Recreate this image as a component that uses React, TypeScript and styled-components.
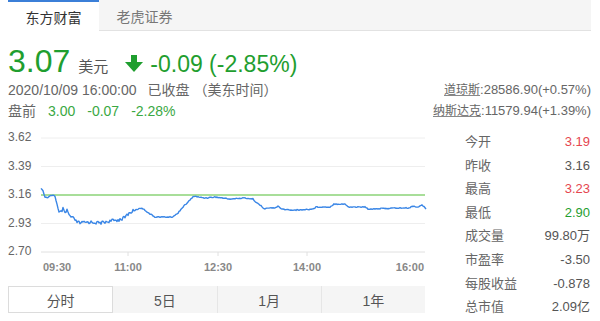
import styled, { createGlobalStyle } from "styled-components";

const GlobalStyle = createGlobalStyle`
  body {
    margin: 0;
    background: #fff;
    font-family: "Liberation Sans", "Noto Sans CJK SC", sans-serif;
  }
`;

const GREEN = "#1f9e2f";
const LIGHT_GREEN = "#3aa843";
const RED = "#e5464f";

const Page = styled.div`
  width: 583px;
  padding: 0 9px 0 8px;
  color: #666;
`;

const Tabs = styled.div`
  display: flex;
  height: 30px;
  background: #f5f5f5;
  border-bottom: 1px solid #e2e2e2;
`;

const Tab = styled.div<{ $active?: boolean }>`
  width: 91px;
  height: ${(p) => (p.$active ? "29px" : "28px")};
  margin-bottom: ${(p) => (p.$active ? "-1px" : "0")};
  border-top: 2px solid ${(p) => (p.$active ? "#3b7fd8" : "transparent")};
  background: ${(p) => (p.$active ? "#fff" : "transparent")};
  display: flex;
  align-items: center;
  justify-content: center;
  font-size: 14px;
  color: ${(p) => (p.$active ? "#333" : "#777")};
`;

const PriceRow = styled.div`
  display: flex;
  align-items: baseline;
  margin-top: 12px;
  height: 36px;
  line-height: 36px;
  color: ${GREEN};
`;

const Price = styled.span`
  font-size: 32px;
`;

const Unit = styled.span`
  font-size: 15px;
  margin-left: 8px;
  color: #555;
`;

const Arrow = styled.svg`
  width: 18px;
  height: 17px;
  margin-left: 17px;
  align-self: center;
  margin-top: 4px;
`;

const Change = styled.span`
  font-size: 23px;
  margin-left: 7px;
`;

const MetaRow = styled.div`
  display: flex;
  justify-content: space-between;
  align-items: center;
  height: 20px;
  line-height: 20px;
  margin-top: 1px;
`;

const MetaLeft = styled.div`
  display: flex;
  font-size: 14px;
  color: #666;
`;

const Gap = styled.span<{ $w: number }>`
  margin-left: ${(p) => p.$w}px;
`;

const Pre = styled.span`
  color: ${LIGHT_GREEN};
`;

const IndexLine = styled.div`
  font-size: 13px;
  color: #666;

  u {
    font-size: 12px;
    text-decoration-color: #888;
  }
`;

const Body = styled.div`
  display: flex;
  margin-top: 3px;
`;

const ChartColumn = styled.div`
  width: 420px;
  display: flex;
  flex-direction: column;
`;

const ChartSvg = styled.svg`
  display: block;
  width: 420px;
  height: 152px;
`;

const Periods = styled.div`
  display: flex;
  width: 417px;
  height: 27px;
  margin-top: 10px;
  background: #f5f5f5;
`;

const Period = styled.div<{ $active?: boolean; $sep?: boolean }>`
  flex: 1;
  display: flex;
  align-items: center;
  justify-content: center;
  font-size: 14px;
  color: #555;
  box-sizing: border-box;
  background: ${(p) => (p.$active ? "#fff" : "transparent")};
  border: ${(p) => (p.$active ? "1px solid #dcdcdc" : "none")};
  border-left: ${(p) =>
    p.$active ? "1px solid #dcdcdc" : p.$sep ? "1px solid #e6e6e6" : "none"};
`;

const Stats = styled.div`
  flex: 1;
  padding: 6px 1px 0 37px;
`;

const StatRow = styled.div`
  display: flex;
  justify-content: space-between;
  height: 23.6px;
  line-height: 23.6px;
  font-size: 13px;
`;

const StatLabel = styled.span`
  color: #666;
`;

const StatValue = styled.span<{ $tone?: "up" | "down" }>`
  color: ${(p) => (p.$tone === "up" ? RED : p.$tone === "down" ? GREEN : "#555")};
`;

const KEY: [number, number][] = [
  [41, 188], [43, 191], [45, 197], [48, 198], [50, 196], [53, 195], [55, 196],
  [57, 205], [59, 213], [61, 212], [63, 209], [65, 214], [67, 210], [69, 215],
  [71, 217], [74, 219], [77, 222], [80, 223], [90, 222], [100, 223], [110, 221],
  [118, 220], [124, 218], [128, 214], [133, 211], [138, 209], [142, 208],
  [146, 211], [150, 214], [155, 217], [165, 217], [172, 217], [177, 214],
  [182, 208], [186, 204], [190, 200], [194, 196], [198, 197], [205, 198],
  [215, 197], [230, 199], [245, 198], [253, 199], [257, 203], [261, 206],
  [265, 209], [268, 208], [275, 208], [278, 206], [281, 209], [290, 210],
  [300, 210], [313, 209], [316, 207], [330, 207], [334, 204], [345, 204],
  [348, 207], [365, 207], [368, 209], [400, 208], [410, 208], [412, 206],
  [418, 207], [422, 205], [425, 208], [426, 209],
];

function buildLine() {
  const pts: string[] = [];
  let i = 0;
  for (let x = 41; x <= 426; x += 1) {
    while (i < KEY.length - 2 && KEY[i + 1][0] < x) i++;
    const [x0, y0] = KEY[i];
    const [x1, y1] = KEY[i + 1];
    const t = Math.max(0, Math.min(1, (x - x0) / (x1 - x0)));
    const n = Math.sin(x * 12.9898) * 43758.5453;
    const amp = x > 56 && x < 135 ? 1.6 : 0.5;
    const y = y0 + (y1 - y0) * t + (n - Math.floor(n) - 0.5) * 2 * amp;
    pts.push(`${x},${y.toFixed(1)}`);
  }
  return pts.join(" ");
}

const GRID = [
  { y: 138, label: "3.62" },
  { y: 166.5, label: "3.39" },
  { y: 195, label: "3.16" },
  { y: 223.5, label: "2.93" },
  { y: 252, label: "2.70" },
];

const TIMES = [
  { x: 43, label: "09:30", anchor: "start" },
  { x: 128, label: "11:00", anchor: "middle" },
  { x: 218, label: "12:30", anchor: "middle" },
  { x: 307, label: "14:00", anchor: "middle" },
  { x: 424, label: "16:00", anchor: "end" },
];

const STATS: { label: string; value: string; tone?: "up" | "down" }[] = [
  { label: "今开", value: "3.19", tone: "up" },
  { label: "昨收", value: "3.16" },
  { label: "最高", value: "3.23", tone: "up" },
  { label: "最低", value: "2.90", tone: "down" },
  { label: "成交量", value: "99.80万" },
  { label: "市盈率", value: "-3.50" },
  { label: "每股收益", value: "-0.878" },
  { label: "总市值", value: "2.09亿" },
];

const Chart = () => (
  <ChartSvg viewBox="8 124 420 152">
    {GRID.map((g, i) => (
      <g key={g.label}>
        <line
          x1={41}
          x2={425}
          y1={g.y}
          y2={g.y}
          stroke={i === GRID.length - 1 ? "#e0e0e0" : "#eeeeee"}
          strokeWidth={1}
        />
        <text
          x={8}
          y={g.y + 3}
          fontSize={12}
          fill="#666"
          fontFamily="Liberation Sans, sans-serif"
        >
          {g.label}
        </text>
      </g>
    ))}
    {[128, 218, 307].map((x) => (
      <line key={x} x1={x} x2={x} y1={252} y2={256} stroke="#e0e0e0" />
    ))}
    <line x1={41} x2={425} y1={195} y2={195} stroke="#8ed67a" strokeWidth={1.3} />
    <polyline
      points={buildLine()}
      fill="none"
      stroke="#3a86e6"
      strokeWidth={1.4}
      strokeLinejoin="round"
    />
    {TIMES.map((t) => (
      <text
        key={t.label}
        x={t.x}
        y={271}
        fontSize={11}
        fontWeight="bold"
        fill="#888"
        textAnchor={t.anchor as "start" | "middle" | "end"}
        fontFamily="Liberation Sans, sans-serif"
      >
        {t.label}
      </text>
    ))}
  </ChartSvg>
);

export default function App() {
  return (
    <Page>
      <GlobalStyle />
      <Tabs>
        <Tab $active>东方财富</Tab>
        <Tab>老虎证券</Tab>
      </Tabs>

      <PriceRow>
        <Price>3.07</Price>
        <Unit>美元</Unit>
        <Arrow viewBox="0 0 18 17">
          <rect x="6" y="0" width="6" height="8" fill={GREEN} />
          <polygon points="0,7 18,7 9,17" fill={GREEN} />
        </Arrow>
        <Change>-0.09 (-2.85%)</Change>
      </PriceRow>

      <MetaRow>
        <MetaLeft>
          <span>2020/10/09 16:00:00</span>
          <Gap $w={11}>已收盘</Gap>
          <Gap $w={4}>（美东时间）</Gap>
        </MetaLeft>
        <IndexLine>
          <u>道琼斯</u>:28586.90(+0.57%)
        </IndexLine>
      </MetaRow>

      <MetaRow>
        <MetaLeft>
          <span>盘前</span>
          <Gap $w={12}>
            <Pre>3.00</Pre>
          </Gap>
          <Gap $w={12}>
            <Pre>-0.07</Pre>
          </Gap>
          <Gap $w={12}>
            <Pre>-2.28%</Pre>
          </Gap>
        </MetaLeft>
        <IndexLine>
          <u>纳斯达克</u>:11579.94(+1.39%)
        </IndexLine>
      </MetaRow>

      <Body>
        <ChartColumn>
          <Chart />
          <Periods>
            <Period $active>分时</Period>
            <Period>5日</Period>
            <Period $sep>1月</Period>
            <Period $sep>1年</Period>
          </Periods>
        </ChartColumn>
        <Stats>
          {STATS.map((s) => (
            <StatRow key={s.label}>
              <StatLabel>{s.label}</StatLabel>
              <StatValue $tone={s.tone}>{s.value}</StatValue>
            </StatRow>
          ))}
        </Stats>
      </Body>
    </Page>
  );
}
